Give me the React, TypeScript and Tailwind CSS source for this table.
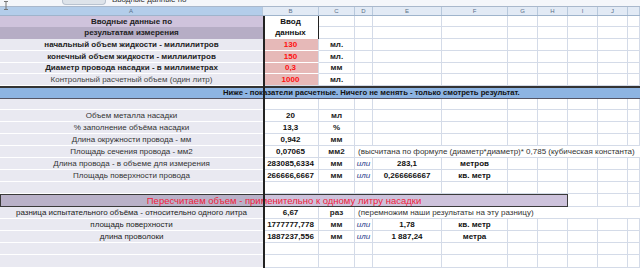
import React from 'react'

const grid = 'grid grid-cols-[263px_56px_36px_18px_69px_66px_30px_30px_30px_30px_12px]'
const cell = 'flex items-center justify-center border-b border-r border-[#d4dbe8] whitespace-nowrap'

const letters = ['A', 'B', 'C', 'D', 'E', 'F', 'G', 'H', 'I', 'J', '']

interface RowProps {
  h?: string
  a?: string
  aClass?: string
  b?: string
  bClass?: string
  c?: string
  ili?: boolean
  e?: string
  f?: string
  note?: string
}

function Row({ h = 'h-[12px]', a, aClass = '', b, bClass = '', c, ili, e, f, note }: RowProps) {
  return (
    <div className={`${grid} ${h}`}>
      <div className={`flex items-center justify-center border-b border-white bg-[#e9e9f1] whitespace-nowrap ${aClass}`}>
        {a}
      </div>
      <div className={`${cell} font-bold text-[#111] ${bClass}`}>{b}</div>
      <div className={`${cell} font-bold text-[#222]`}>{c}</div>
      {note ? (
        <div className="col-span-8 flex items-center pl-[3px] border-b border-[#d4dbe8] whitespace-nowrap text-[#333]">
          {note}
        </div>
      ) : (
        <>
          <div className={`${cell} italic text-[#1f3b8a]`}>{ili ? 'или' : ''}</div>
          <div className={`${cell} font-bold text-[#111]`}>{e}</div>
          <div className={`${cell} font-bold text-[#111]`}>{f}</div>
          <div className={cell}></div>
          <div className={cell}></div>
          <div className={cell}></div>
          <div className={cell}></div>
          <div className={cell}></div>
        </>
      )}
    </div>
  )
}

export default function App() {
  return (
    <div className="relative w-[640px] h-[268px] overflow-hidden bg-white text-[8px] leading-none font-['Liberation_Sans',Arial,sans-serif]">
      {/* формульная строка (обрезана сверху) */}
      <div className="flex h-[7px] items-start overflow-hidden border-b border-[#a9b8cc] bg-[#f4f6fa]">
        <div className="ml-[62px] h-[5px] w-[44px] rounded-b-[4px] border border-t-0 border-[#b8c2cf] bg-[#dde3ea]"></div>
        <span className="ml-[6px] -mt-[4px] text-[8px] text-[#333]">Вводные данные по</span>
      </div>

      {/* курсор */}
      <svg className="absolute left-[3px] top-[1px]" width="6" height="9" viewBox="0 0 6 9">
        <path d="M1 0.5h4M3 0.5v8M1 8.5h4" stroke="#777" strokeWidth="1" fill="none" />
      </svg>

      {/* заголовки столбцов */}
      <div className={`${grid} h-[9px] border-b border-[#9fb4cc]`}>
        {letters.map((l, i) => (
          <div
            key={i}
            className={`flex items-center justify-center border-r border-[#b7c8dc] text-[6px] text-[#5a6f88] ${
              i === 0 ? 'bg-[#b3cdea]' : 'bg-[#e2eaf5]'
            }`}
          >
            {l}
          </div>
        ))}
      </div>

      {/* шапка */}
      <div className={`${grid} h-[11px]`}>
        <div className="flex items-center justify-center bg-[#cfc3dc] font-bold text-[#222]">Вводные данные по</div>
        <div className="flex items-center justify-center border-r border-[#222] bg-white font-bold text-[#111]">Ввод</div>
        {letters.slice(2).map((_, i) => (
          <div key={i} className={cell}></div>
        ))}
      </div>
      <div className={`${grid} h-[12px]`}>
        <div className="flex items-center justify-center bg-[#b6adc5] font-bold text-[#222]">результатам измерения</div>
        <div className="flex items-center justify-center border-r border-[#222] bg-white font-bold text-[#111]">данных</div>
        {letters.slice(2).map((_, i) => (
          <div key={i} className={cell}></div>
        ))}
      </div>

      <Row a="начальный объем  жидкости  - миллилитров" aClass="font-bold text-[#222]" b="130" bClass="bg-[#e6b9b8] !text-[#ff1010] border-b-white" c="мл." />
      <Row a="конечный объем жидкости   - миллилитров" aClass="font-bold text-[#222]" b="150" bClass="bg-[#e6b9b8] !text-[#ff1010] border-b-white" c="мл." />
      <Row h="h-[11px]" a="Диаметр провода насадки  - в миллиметрах" aClass="font-bold text-[#222]" b="0,3" bClass="bg-[#e6b9b8] !text-[#ff1010] border-b-white" c="мм" />
      <Row a="Контрольный расчетный объем (один литр)" aClass="text-[#444]" b="1000" bClass="bg-[#e6b9b8] !text-[#ff1010]" c="мл." />

      {/* синяя полоса */}
      <div className="flex h-[13px] items-center border-t-2 border-b border-t-[#333] border-b-[#556] bg-[#8db4e2] pl-[223px] text-[7.7px] font-bold text-[#111] whitespace-nowrap">
        Ниже - показатели расчетные.  Ничего не менять - только смотреть результат.
      </div>

      <Row h="h-[11px]" />
      <Row a="Объем металла насадки" aClass="text-[#333]" b="20" c="мл" />
      <Row a="% заполнение объёма насадки" aClass="text-[#333]" b="13,3" c="%" />
      <Row a="Длина окружности провода - мм" aClass="text-[#333]" b="0,942" c="мм" />
      <Row
        a="Площадь сечения провода -  мм2"
        aClass="text-[#333]"
        b="0,07065"
        c="мм2"
        note="(высчитана по формуле (диаметр*диаметр)* 0,785 (кубическая константа)"
      />
      <Row a="Длина провода - в объеме для измерения" aClass="text-[#333]" b="283085,6334" c="мм" ili e="283,1" f="метров" />
      <Row a="Площадь поверхности провода" aClass="text-[#333]" b="266666,6667" c="мм" ili e="0,266666667" f="кв. метр" />
      <Row />

      {/* пересчёт */}
      <div className={`${grid} h-[13px]`}>
        <div className="col-span-8 flex items-center justify-center border border-[#3a3a3a] bg-[linear-gradient(to_right,#b9b1c8_263px,#cdc2db_263px)] text-[9.5px] text-[#f0203a] whitespace-nowrap">
          Пересчитаем объем - применительно к одному литру насадки
        </div>
        <div className={cell}></div>
        <div className={cell}></div>
        <div className={cell}></div>
      </div>

      <Row
        a="разница испытательного объёма - относительно одного литра"
        aClass="text-[#222]"
        b="6,67"
        c="раз"
        note="(перемножим наши результаты на эту разницу)"
      />
      <Row a="площадь поверхности" aClass="text-[#222]" b="1777777,778" c="мм" ili e="1,78" f="кв. метр" />
      <Row a="длина проволоки" aClass="text-[#222]" b="1887237,556" c="мм" ili e="1 887,24" f="метра" />
      <Row />
      <Row h="h-[13px]" />

      {/* толстая граница между A и B */}
      <div className="absolute left-[263px] top-[16px] h-[252px] w-[2px] bg-[#222]"></div>
    </div>
  )
}
